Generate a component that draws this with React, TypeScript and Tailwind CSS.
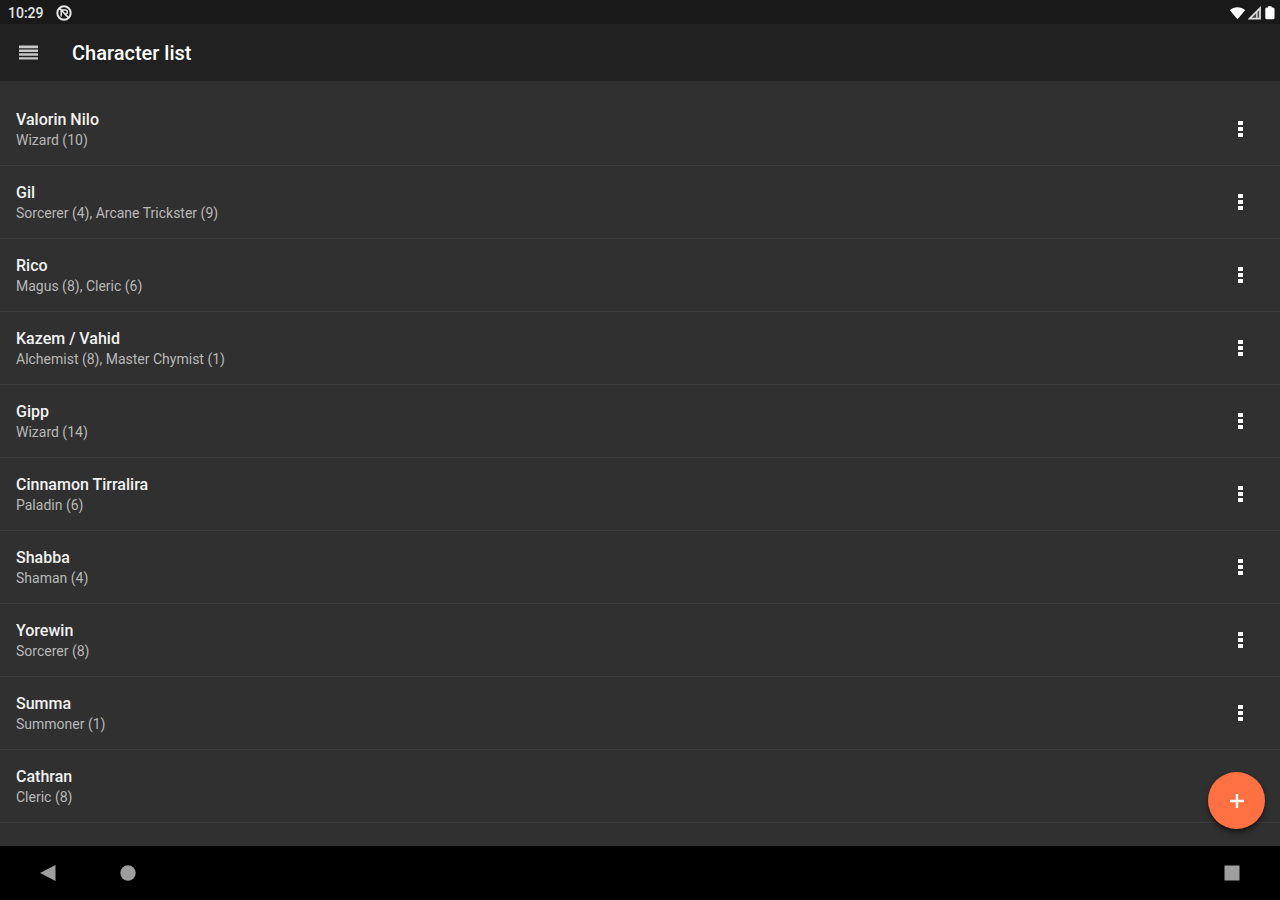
import React from 'react';

interface Character {
  name: string;
  classes: string;
}

const characters: Character[] = [
  { name: 'Valorin Nilo', classes: 'Wizard (10)' },
  { name: 'Gil', classes: 'Sorcerer (4), Arcane Trickster (9)' },
  { name: 'Rico', classes: 'Magus (8), Cleric (6)' },
  { name: 'Kazem / Vahid', classes: 'Alchemist (8), Master Chymist (1)' },
  { name: 'Gipp', classes: 'Wizard (14)' },
  { name: 'Cinnamon Tirralira', classes: 'Paladin (6)' },
  { name: 'Shabba', classes: 'Shaman (4)' },
  { name: 'Yorewin', classes: 'Sorcerer (8)' },
  { name: 'Summa', classes: 'Summoner (1)' },
  { name: 'Cathran', classes: 'Cleric (8)' },
];

const StatusBar: React.FC = () => (
  <div className="flex h-6 shrink-0 items-center justify-between bg-[#191919] pt-px pr-1 pl-2 text-[#e6e6e6]">
    <div className="flex items-center gap-3">
      <span className="text-sm font-medium">10:29</span>
      <svg className="size-4" viewBox="0 0 16 16" fill="none" stroke="currentColor" aria-hidden="true">
        <circle cx="8" cy="8" r="6.7" strokeWidth="2" />
        <path d="M5.2 11.6V4.8l5.6 6.4M5 5h4.3a2 2 0 0 1 0 4H8M3 3l10 10" strokeWidth="1.5" />
      </svg>
    </div>
    <div className="flex items-center gap-0.5 text-white">
      <svg className="h-4 w-[17px]" viewBox="0 0 17 16" fill="currentColor" aria-hidden="true">
        <path d="M8.5 14.2.8 5.2C5 1.3 12 1.3 16.2 5.2z" />
      </svg>
      <svg className="h-4 w-[14px]" viewBox="0 0 14 16" aria-hidden="true">
        <path d="M1.6 13.6 12 3.2v10.4z" fill="#444" stroke="#ddd" strokeWidth="1.8" />
        <path d="M8.8 7v6" stroke="#ddd" strokeWidth="1.4" />
      </svg>
      <svg className="h-4 w-3" viewBox="0 0 12 16" fill="currentColor" aria-hidden="true">
        <path d="M4 1.2h3.6v1.4H9q1.5 0 1.5 1.5v8.6q0 1.5-1.5 1.5H2.8q-1.5 0-1.5-1.5V4.1q0-1.5 1.5-1.5H4z" />
      </svg>
    </div>
  </div>
);

const AppBar: React.FC = () => (
  <header className="flex h-[57px] shrink-0 items-center gap-8 bg-[#212121] px-4">
    <button type="button" aria-label="Open menu" className="text-[#c8c8c8]">
      <svg className="size-6" viewBox="0 0 24 24" fill="currentColor">
        <path d="M3 4.5h19v2.8H3zM3 8.4h19v2.6H3zM3 12.2h19v2.6H3zM3 16.2h19v2.4H3z" />
      </svg>
    </button>
    <h1 className="text-xl font-medium text-white">Character list</h1>
  </header>
);

const CharacterRow: React.FC<Character> = ({ name, classes }) => (
  <li className="flex h-[73px] items-center justify-between border-b border-[#3d3d3d] pr-7 pl-4">
    <div className="pt-0.5">
      <p className="text-base leading-5 font-medium text-[#f2f2f2]">{name}</p>
      <p className="text-sm leading-5 text-[#b8b8b8]">{classes}</p>
    </div>
    <button type="button" aria-label={`Options for ${name}`} className="text-white">
      <svg className="h-6 w-6" viewBox="0 0 24 24" fill="currentColor">
        <path d="M10 4h5v4h-5zM10 10h5v4h-5zM10 16h5v4h-5z" />
      </svg>
    </button>
  </li>
);

const NavigationBar: React.FC = () => (
  <nav className="flex h-[54px] shrink-0 items-center justify-between bg-black px-10 text-[#9e9e9e]">
    <div className="flex items-center gap-16">
      <button type="button" aria-label="Back">
        <svg className="size-4" viewBox="0 0 16 16" fill="currentColor">
          <path d="M0 8 15.5 0v16z" />
        </svg>
      </button>
      <button type="button" aria-label="Home">
        <svg className="size-4" viewBox="0 0 16 16" fill="currentColor">
          <circle cx="8" cy="8" r="7.7" />
        </svg>
      </button>
    </div>
    <button type="button" aria-label="Recent apps">
      <svg className="size-4" viewBox="0 0 16 16" fill="currentColor">
        <path d="M.5.5h15v15H.5z" />
      </svg>
    </button>
  </nav>
);

const App: React.FC = () => {
  return (
    <div className="flex h-screen flex-col bg-[#303030] font-['Roboto',sans-serif]">
      <StatusBar />
      <AppBar />
      <main className="relative min-h-0 flex-1 overflow-hidden pt-3">
        <ul>
          {characters.map((character) => (
            <CharacterRow key={character.name} {...character} />
          ))}
        </ul>
        <button
          type="button"
          aria-label="Add character"
          className="absolute right-[15px] bottom-[17px] flex size-[57px] items-center justify-center rounded-full bg-[#ff7043] text-white shadow-md shadow-black/50"
        >
          <svg className="size-6" viewBox="0 0 24 24" fill="currentColor">
            <path d="M10.8 5h2.4v5.8h5.8v2.4h-5.8V19h-2.4v-5.8H5v-2.4h5.8z" />
          </svg>
        </button>
      </main>
      <NavigationBar />
    </div>
  );
};

export default App;
